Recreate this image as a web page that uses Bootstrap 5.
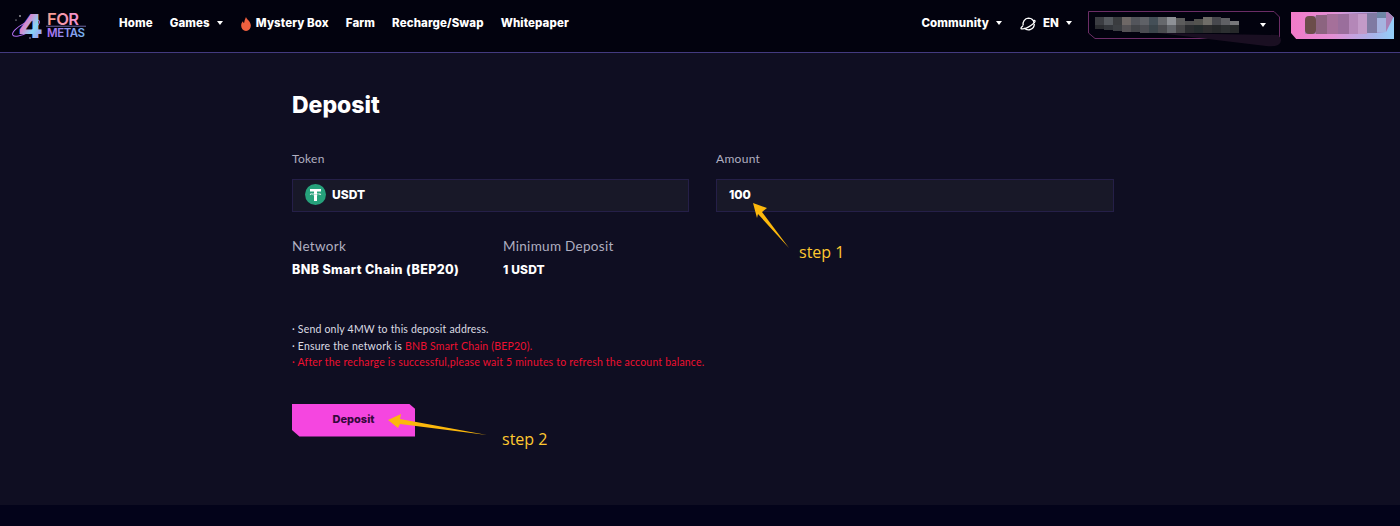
<!doctype html>
<html lang="en">
<head>
<meta charset="utf-8">
<title>Deposit</title>
<link href="https://cdn.jsdelivr.net/npm/bootstrap@5.3.0/dist/css/bootstrap.min.css" rel="stylesheet">
<style>
html,body{height:526px;overflow:hidden}
body{background:#0f0e22;font-family:"Inter","Liberation Sans",sans-serif;color:#fff}
.top-bar{height:53px;background:#02020e;border-bottom:1px solid #433a80;padding:0 6px 4px 10px}
.brand-mark{width:78px;height:40px;margin-right:31px}
.nav-txt{font-size:11.5px;font-weight:800;letter-spacing:.1px;color:#fff;white-space:nowrap;text-decoration:none}
.nav-gap{margin-left:17px}
.caret-mini{display:inline-block;width:0;height:0;border-left:3.5px solid transparent;border-right:3.5px solid transparent;border-top:4px solid #fff;margin-left:7px;vertical-align:2px}
.globe-mark{margin-left:18px;margin-right:6px}
.wallet-box{width:192px;height:28px;margin-left:16px;margin-top:2px;position:relative}
.wallet-box svg.frame{position:absolute;inset:0;overflow:visible}
.profile-btn{width:103px;height:27px;margin-left:11px;margin-top:3px;background:linear-gradient(90deg,#f17ac8 0%,#e48fd4 40%,#a8b4ea 80%,#92d0fa 100%);clip-path:polygon(0 0,94% 0,100% 20%,100% 100%,5% 100%,0 78%);position:relative}
.profile-blur{position:absolute;left:0;top:0}
.page-wrap{height:452px;width:822px;margin-left:292px;padding-top:39px}
.page-title{font-size:23px;font-weight:800;line-height:26px;margin:0 0 34px}
.field-label{font-family:"Lato","Liberation Sans",sans-serif;font-size:12px;line-height:14px;color:#b0afc0;margin-bottom:13px;letter-spacing:.3px}
.dark-field{height:33px;background:#181828;border:1px solid #251f48;font-size:12px;font-weight:800;display:flex;align-items:center;padding-bottom:2px}
.token-field{padding-left:12px;gap:6px}
.amount-field{padding-left:12px}
.field-row{display:grid;grid-template-columns:397px 398px;column-gap:27px}
.net-row{margin-top:26px;display:flex}
.net-col{width:211px}
.net-label{font-family:"Lato","Liberation Sans",sans-serif;font-size:13.5px;line-height:16px;color:#b0afc0;letter-spacing:.3px;margin-bottom:8px}
.net-val{font-size:12px;font-weight:800;line-height:16px;letter-spacing:.15px}
.net-wide{font-size:12.5px;letter-spacing:.38px}
.notes{margin-top:43px;font-family:"Lato","Liberation Sans",sans-serif;font-size:10.5px;line-height:16.5px;color:#dcdce4;letter-spacing:.2px}
.red-txt{color:#ee1030}
.deposit-btn{width:123px;height:33px;margin-top:33px;background:#f546e0;color:#35093c;font-size:11px;font-weight:800;border:0;padding:0 0 2px 0;clip-path:polygon(0 0,95% 0,100% 16%,100% 100%,6% 100%,0 80%)}
.page-foot{height:21px;background:#03031a}
.step-note{position:absolute;color:#ffc830;font-family:"Open Sans","Liberation Sans",sans-serif;font-size:16px;line-height:20px}
.anno-svg{position:absolute;left:0;top:0;pointer-events:none}
</style>
</head>
<body class="position-relative">
<nav class="top-bar d-flex align-items-center">
  <svg class="brand-mark flex-shrink-0" viewBox="0 0 78 40">
    <defs>
      <linearGradient id="g4" x1="0" y1="0" x2="1" y2="1"><stop offset="0" stop-color="#f8c070"/><stop offset=".3" stop-color="#f06fc0"/><stop offset=".6" stop-color="#86d6f7"/><stop offset="1" stop-color="#b070f0"/></linearGradient>
      <linearGradient id="gf" x1="0" y1="0" x2="1" y2="0"><stop offset="0" stop-color="#f7a08a"/><stop offset="1" stop-color="#f290d4"/></linearGradient>
      <linearGradient id="gm" x1="0" y1="0" x2="1" y2="0"><stop offset="0" stop-color="#b06cf0"/><stop offset="1" stop-color="#74b8f0"/></linearGradient>
    </defs>
    <ellipse cx="16" cy="24" rx="15" ry="5" fill="none" stroke="#b06cf0" stroke-width="1" transform="rotate(-28 16 24)"/>
    <text x="8" y="34" font-family="Inter" font-weight="800" font-size="33" textLength="25" lengthAdjust="spacingAndGlyphs" fill="url(#g4)">4</text>
    <circle cx="10" cy="12" r=".8" fill="#fff"/><circle cx="6" cy="16" r=".6" fill="#fff"/><circle cx="20" cy="34" r=".7" fill="#cfc8f0"/>
    <text x="37" y="21" font-family="Inter" font-weight="600" font-size="16.500" textLength="32" fill="url(#gf)">FOR</text>
    <rect x="36" y="21.800" width="40" height=".7" fill="#9a8fe0"/>
    <text x="37" y="33" font-family="Inter" font-weight="600" font-size="11.500" textLength="38" fill="url(#gm)">METAS</text>
  </svg>
  <div class="d-flex align-items-center">
    <a class="nav-txt" href="#">Home</a>
    <a class="nav-txt nav-gap" href="#">Games<span class="caret-mini"></span></a>
    <a class="nav-txt nav-gap d-flex align-items-center" href="#">
      <svg class="me-1" width="12" height="14" viewBox="0 0 12 14"><path d="M6 0c.6 2.400 4.800 4.400 4.800 8.300A4.800 5.200 0 0 1 6 14 4.800 5.200 0 0 1 1.200 8.300C1.200 6.500 2 5.200 3 4.300c.1 1 .5 1.700 1 2C4.300 4 5 2 6 0z" fill="#f0603f"/></svg>Mystery Box</a>
    <a class="nav-txt nav-gap" href="#">Farm</a>
    <a class="nav-txt nav-gap" href="#">Recharge/Swap</a>
    <a class="nav-txt nav-gap" href="#">Whitepaper</a>
  </div>
  <div class="d-flex align-items-center ms-auto">
    <a class="nav-txt" href="#">Community<span class="caret-mini"></span></a>
    <svg class="globe-mark" width="17" height="16" viewBox="0 0 17 16" fill="none" stroke="#fff" stroke-width="1.300"><path d="M3.200 9.500A5.800 5.800 0 0 1 8.500 2.200a5.800 5.800 0 0 1 5.600 5"/><path d="M14.300 8a5.800 5.800 0 0 1-10 4"/><path d="M3 9.800c-2 1.500-2.500 2.800-1.500 3 2 .4 6-1 9-3s5-4 4.500-5c-.2-.4-1-.4-2 0"/></svg>
    <a class="nav-txt" href="#">EN<span class="caret-mini"></span></a>
    <div class="wallet-box">
      <svg class="frame" width="192" height="28" viewBox="0 0 192 28">
        <path d="M.5.500H186L191.500 6V27.500H7L.5 22z" fill="none" stroke="#6b2d66"/>
        <path d="M70 22L190 24q6 6 0 10q-4 2-12 1z" fill="#1a0f22"/>
        <g>
          <rect x="7" y="6" width="9" height="8" fill="#3b3d42"/><rect x="16" y="6" width="9" height="8" fill="#55595e"/><rect x="25" y="6" width="9" height="8" fill="#3a3c3f"/><rect x="34" y="6" width="9" height="8" fill="#6e6866"/><rect x="43" y="6" width="9" height="8" fill="#53555b"/><rect x="52" y="6" width="9" height="8" fill="#5f6167"/><rect x="61" y="6" width="9" height="8" fill="#444f57"/><rect x="70" y="6" width="9" height="8" fill="#66686c"/><rect x="79" y="6" width="9" height="8" fill="#8e9196"/><rect x="88" y="7" width="9" height="7" fill="#5c5c5c"/><rect x="97" y="10" width="9" height="4" fill="#4f4f50"/><rect x="106" y="8" width="9" height="6" fill="#53534f"/><rect x="115" y="6" width="9" height="8" fill="#6f6d68"/><rect x="124" y="6" width="9" height="8" fill="#47484d"/><rect x="133" y="7" width="9" height="7" fill="#5f6064"/><rect x="142" y="10" width="9" height="4" fill="#77777a"/>
          <rect x="7" y="14" width="9" height="4" fill="#2a2c30"/><rect x="16" y="14" width="9" height="5" fill="#33363b"/><rect x="25" y="14" width="9" height="6" fill="#3c3f43"/><rect x="34" y="14" width="9" height="7" fill="#545255"/><rect x="43" y="14" width="9" height="7" fill="#424448"/><rect x="52" y="14" width="9" height="8" fill="#4b4c52"/><rect x="61" y="14" width="9" height="8" fill="#3a444a"/><rect x="70" y="14" width="9" height="8" fill="#4a4b4f"/><rect x="79" y="14" width="9" height="8" fill="#62656a"/><rect x="88" y="14" width="9" height="8" fill="#454547"/><rect x="97" y="14" width="9" height="8" fill="#2a2c2f"/><rect x="106" y="14" width="9" height="8" fill="#232a2c"/><rect x="115" y="14" width="9" height="8" fill="#2c2c2e"/><rect x="124" y="14" width="9" height="8" fill="#26282a"/><rect x="133" y="14" width="9" height="8" fill="#2c2f31"/><rect x="142" y="14" width="9" height="8" fill="#26282a"/>
        </g>
      </svg>
      <span class="caret-mini position-absolute" style="right:14px;top:12px"></span>
    </div>
    <div class="profile-btn">
      <svg class="profile-blur" width="103" height="27" viewBox="0 0 103 27">
        <path d="M24 22H14Q14 4 30 3L90 0H103V4L95 20L60 22z" fill="#a97fb5"/>
        <rect x="14" y="4" width="11" height="18" rx="4" fill="#6b4d4a"/><rect x="25" y="3" width="11" height="19" fill="#8c6480"/><rect x="36" y="2" width="11" height="20" fill="#a5709a"/><rect x="47" y="2" width="11" height="20" fill="#9a6e9c"/><rect x="58" y="2" width="9" height="20" fill="#b487b8"/><rect x="67" y="2" width="9" height="20" fill="#c39ac8"/><rect x="76" y="1" width="10" height="20" fill="#7f7aa2"/><rect x="86" y="0" width="9" height="6" fill="#6d86a5"/><rect x="86" y="6" width="9" height="14" fill="#a6b4e0"/>
      </svg>
    </div>
  </div>
</nav>
<main class="page-wrap">
  <h1 class="page-title">Deposit</h1>
  <div class="field-row">
    <div>
      <div class="field-label">Token</div>
      <div class="dark-field token-field">
        <svg width="21" height="21" viewBox="0 0 21 21"><circle cx="10.500" cy="10.500" r="10.500" fill="#26a17b"/><path d="M5 5h11v2.500h-4v1.700c2.500.1 4.300.5 4.300 1s-1.800.9-4.300 1V17H9v-5.800c-2.500-.1-4.300-.5-4.300-1s1.800-.9 4.300-1V7.500H5zM9 9.800c-1.700.1-3 .2-3 .4s3 .6 4.500.6 4.500-.3 4.500-.6-1.300-.3-3-.4v.8H9z" fill="#fff" fill-rule="evenodd"/></svg>
        USDT
      </div>
    </div>
    <div>
      <div class="field-label">Amount</div>
      <div class="dark-field amount-field">100</div>
    </div>
  </div>
  <div class="net-row">
    <div class="net-col"><div class="net-label">Network</div><div class="net-val net-wide">BNB Smart Chain (BEP20)</div></div>
    <div class="net-col"><div class="net-label">Minimum Deposit</div><div class="net-val">1 USDT</div></div>
  </div>
  <div class="notes">
    <div>· Send only 4MW to this deposit address.</div>
    <div>· Ensure the network is <span class="red-txt">BNB Smart Chain (BEP20).</span></div>
    <div class="red-txt">· After the recharge is successful,please wait 5 minutes to refresh the account balance.</div>
  </div>
  <button class="deposit-btn d-block" type="button">Deposit</button>
</main>
<div class="page-foot"></div>
<svg class="anno-svg" width="1400" height="526" viewBox="0 0 1400 526">
  <path d="M753 203L767 208L762 212L789 248L758 214L757 218z" fill="#fcb80c"/>
  <path d="M388 420L401 414L400 419L487 435L400 424L398 428z" fill="#fcb80c"/>
</svg>
<div class="step-note" style="left:799px;top:242px">step 1</div>
<div class="step-note" style="left:502px;top:429px">step 2</div>
</body>
</html>
